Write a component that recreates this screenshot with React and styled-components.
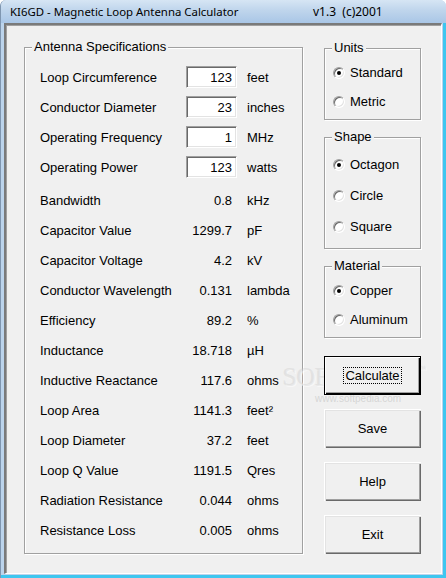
import React, { useState } from 'react'
import styled, { createGlobalStyle } from 'styled-components'

const GlobalStyle = createGlobalStyle`
  html, body {
    margin: 0;
    padding: 0;
    background: #ffffff;
  }
  body {
    font-family: "Liberation Sans", Arial, sans-serif;
    font-size: 13px;
    color: #000;
  }
`

const specInputs = [
  { label: 'Loop Circumference', value: '123', unit: 'feet' },
  { label: 'Conductor Diameter', value: '23', unit: 'inches' },
  { label: 'Operating Frequency', value: '1', unit: 'MHz' },
  { label: 'Operating Power', value: '123', unit: 'watts' },
]

const specResults = [
  { label: 'Bandwidth', value: '0.8', unit: 'kHz' },
  { label: 'Capacitor Value', value: '1299.7', unit: 'pF' },
  { label: 'Capacitor Voltage', value: '4.2', unit: 'kV' },
  { label: 'Conductor Wavelength', value: '0.131', unit: 'lambda' },
  { label: 'Efficiency', value: '89.2', unit: '%' },
  { label: 'Inductance', value: '18.718', unit: 'µH' },
  { label: 'Inductive Reactance', value: '117.6', unit: 'ohms' },
  { label: 'Loop Area', value: '1141.3', unit: 'feet²' },
  { label: 'Loop Diameter', value: '37.2', unit: 'feet' },
  { label: 'Loop Q Value', value: '1191.5', unit: 'Qres' },
  { label: 'Radiation Resistance', value: '0.044', unit: 'ohms' },
  { label: 'Resistance Loss', value: '0.005', unit: 'ohms' },
]

const optionGroups = [
  { title: 'Units', options: ['Standard', 'Metric'], height: 72, padTop: 9, rowH: 29, gapTop: 1 },
  { title: 'Shape', options: ['Octagon', 'Circle', 'Square'], height: 112, padTop: 11, rowH: 31, gapTop: 17 },
  { title: 'Material', options: ['Copper', 'Aluminum'], height: 72, padTop: 9, rowH: 29, gapTop: 17 },
]

function App() {
  const [inputs, setInputs] = useState(specInputs.map((s) => s.value))
  const [picked, setPicked] = useState({ Units: 'Standard', Shape: 'Octagon', Material: 'Copper' })

  return (
    <>
      <GlobalStyle />
      <Window>
        <TitleBar>
          <TitleText>KI6GD - Magnetic Loop Antenna Calculator</TitleText>
          <Version>v1.3&nbsp;&nbsp;(c)2001</Version>
        </TitleBar>
        <Frame>
          <Client>
            <SpecGroup>
              <GroupTitle>Antenna Specifications</GroupTitle>
              {specInputs.map((s, i) => (
                <Row key={s.label}>
                  <Label>{s.label}</Label>
                  <Field
                    value={inputs[i]}
                    type='text'
                    onChange={(e) => {
                      const next = [...inputs]
                      next[i] = e.target.value
                      setInputs(next)
                    }}
                  />
                  <Unit>{s.unit}</Unit>
                </Row>
              ))}
              <Results>
                {specResults.map((s) => (
                  <Row key={s.label}>
                    <Label>{s.label}</Label>
                    <Value>{s.value}</Value>
                    <Unit>{s.unit}</Unit>
                  </Row>
                ))}
              </Results>
            </SpecGroup>

            <SideColumn>
              {optionGroups.map((g) => (
                <OptionGroup key={g.title} $height={g.height} $padTop={g.padTop} $gapTop={g.gapTop}>
                  <GroupTitle>{g.title}</GroupTitle>
                  {g.options.map((o) => (
                    <RadioRow key={o} $rowH={g.rowH} onClick={() => setPicked({ ...picked, [g.title]: o })}>
                      <RadioDot $checked={picked[g.title] === o} />
                      <span>{o}</span>
                    </RadioRow>
                  ))}
                </OptionGroup>
              ))}
              <Button $primary>
                <Focus>Calculate</Focus>
              </Button>
              <Button>Save</Button>
              <Button>Help</Button>
              <Button>Exit</Button>
            </SideColumn>

            <Watermark aria-hidden='true'>
              <WatermarkWord>
                SOFTPEDIA<sup>™</sup>
              </WatermarkWord>
              <WatermarkUrl>www.softpedia.com</WatermarkUrl>
            </Watermark>
          </Client>
        </Frame>
      </Window>
    </>
  )
}

export default App

const Window = styled.div`
  width: 446px;
  height: 578px;
  display: flex;
  flex-direction: column;
  background: #bcd4ec;
  border-radius: 6px 6px 0 0;
  overflow: hidden;
  box-sizing: border-box;
  border-left: 1px solid #7f96b0;
`

const TitleBar = styled.div`
  height: 23px;
  flex: none;
  display: flex;
  align-items: center;
  background: linear-gradient(to bottom, #d6e5f4 0%, #bfd5ec 45%, #a9c6e6 100%);
  font-family: "Noto Sans", "Open Sans", sans-serif;
  font-size: 11.4px;
  color: #000;
  padding-left: 9px;
  box-sizing: border-box;
`

const TitleText = styled.span`
  width: 303px;
  white-space: nowrap;
`

const Version = styled.span`
  white-space: nowrap;
  font-size: 12px;
`

const Frame = styled.div`
  flex: 1;
  display: flex;
  padding: 0 1px 1px 3px;
  background: #bcd4ec;
  border-right: 3px solid #3ec6ef;
  border-bottom: 3px solid #3ec6ef;
`

const Client = styled.div`
  position: relative;
  flex: 1;
  display: flex;
  align-items: flex-start;
  gap: 21px;
  padding: 22px 18px 0 18px;
  background: #f0f0f0;
  border-top: 2px solid #7a7a7a;
  border-left: 2px solid #7a7a7a;
  border-right: 1px solid #ffffff;
  border-bottom: 1px solid #ffffff;
  box-shadow: inset 1px 1px 0 #a0a0a0;
`

const Group = styled.div`
  position: relative;
  box-sizing: border-box;
  border: 1px solid #a0a0a0;
  box-shadow: 1px 1px 0 #ffffff, inset 1px 1px 0 #ffffff;
`

const SpecGroup = styled(Group)`
  width: 279px;
  height: 507px;
  padding: 14px 0 0 15px;
`

const GroupTitle = styled.span`
  position: absolute;
  top: -9px;
  left: 7px;
  padding: 0 2px;
  background: #f0f0f0;
  line-height: 16px;
  white-space: nowrap;
`

const Results = styled.div`
  margin-top: 3px;
`

const Row = styled.div`
  display: grid;
  grid-template-columns: 146px 51px auto;
  align-items: center;
  height: 30px;
`

const Label = styled.span`
  white-space: nowrap;
`

const Field = styled.input`
  box-sizing: border-box;
  width: 51px;
  height: 22px;
  margin: 0;
  padding: 0 4px 0 0;
  text-align: right;
  font-family: "Liberation Sans", Arial, sans-serif;
  font-size: 13px;
  color: #000;
  background: #ffffff;
  border: 1px solid;
  border-color: #a0a0a0 #ffffff #ffffff #a0a0a0;
  box-shadow: inset 1px 1px 0 #696969, inset -1px -1px 0 #e3e3e3;
  outline: none;
`

const Value = styled.span`
  text-align: right;
  padding-right: 5px;
`

const Unit = styled.span`
  white-space: nowrap;
  padding-left: 10px;
`

const SideColumn = styled.div`
  position: relative;
  z-index: 1;
  width: 97px;
  display: flex;
  flex-direction: column;
`

const OptionGroup = styled(Group)`
  height: ${(p) => p.$height}px;
  margin-top: ${(p) => p.$gapTop}px;
  padding: ${(p) => p.$padTop}px 0 0 8px;
`

const RadioRow = styled.div`
  display: flex;
  align-items: center;
  gap: 5px;
  height: ${(p) => p.$rowH}px;
  cursor: default;
`

const RadioDot = styled.span`
  position: relative;
  width: 12px;
  height: 12px;
  box-sizing: border-box;
  border-radius: 50%;
  border: 1px solid;
  border-color: #a0a0a0 #ffffff #ffffff #a0a0a0;
  box-shadow: inset 1px 1px 0 #696969, inset -1px -1px 0 #e3e3e3;
  background: #ffffff;
  flex: none;

  &::after {
    content: '';
    display: ${(p) => (p.$checked ? 'block' : 'none')};
    position: absolute;
    left: 3px;
    top: 3px;
    width: 4px;
    height: 4px;
    border-radius: 50%;
    background: #000;
  }
`

const Button = styled.button`
  box-sizing: border-box;
  width: 97px;
  height: 39px;
  margin: 14px 0 0 0;
  padding: 0;
  display: flex;
  align-items: center;
  justify-content: center;
  font-family: "Liberation Sans", Arial, sans-serif;
  font-size: 13px;
  color: #000;
  background: #f0f0f0;
  border: ${(p) => (p.$primary ? '1px solid #000' : '0')};
  box-shadow: ${(p) =>
    p.$primary
      ? 'inset 1px 1px 0 #ffffff, inset -1px -1px 0 #000000, inset -2px -2px 0 #a0a0a0'
      : 'inset 1px 1px 0 #ffffff, inset 2px 2px 0 #e3e3e3, inset -1px -1px 0 #696969, inset -2px -2px 0 #a0a0a0'};

  &:first-of-type {
    margin-top: 18px;
  }
`

const Focus = styled.span`
  padding: 0 1px;
  line-height: 15px;
  outline: 1px dotted #000;
`

const Watermark = styled.div`
  position: absolute;
  z-index: 0;
  left: 277px;
  top: 340px;
  pointer-events: none;
`

const WatermarkWord = styled.div`
  font-family: "Liberation Serif", serif;
  font-size: 26px;
  line-height: 26px;
  letter-spacing: -0.5px;
  color: rgba(225, 225, 225, 0.45);
  text-shadow: -1px -1px 0 rgba(200, 200, 200, 0.35), 1px 1px 0 rgba(255, 255, 255, 0.5);

  sup {
    font-size: 8px;
    vertical-align: top;
    line-height: 10px;
  }
`

const WatermarkUrl = styled.div`
  font-family: "Liberation Sans", Arial, sans-serif;
  font-size: 10px;
  line-height: 12px;
  margin: 2px 0 0 32px;
  color: rgba(195, 195, 195, 0.6);
`
